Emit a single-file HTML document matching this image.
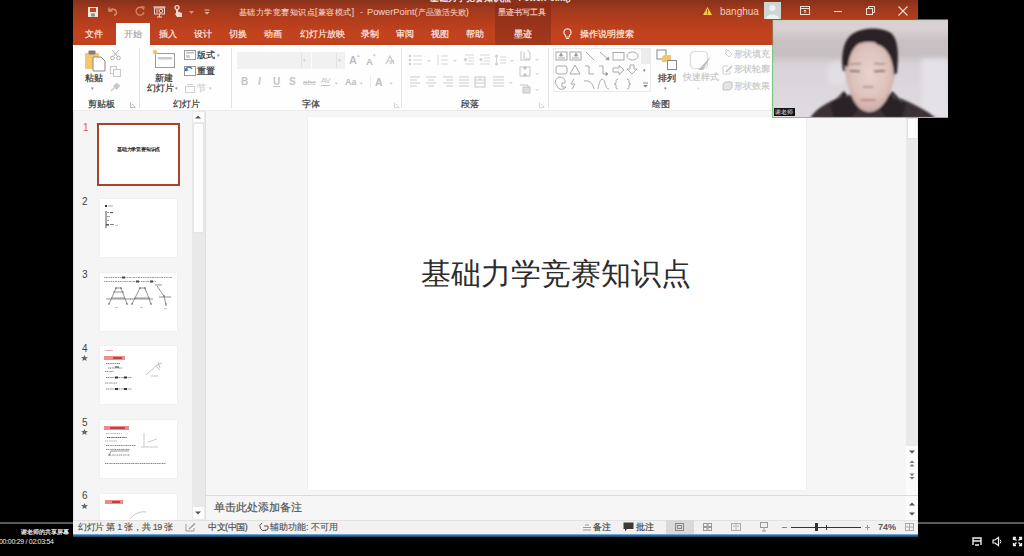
<!DOCTYPE html>
<html><head><meta charset="utf-8">
<style>
*{margin:0;padding:0;box-sizing:border-box}
html,body{width:1024px;height:556px;overflow:hidden;background:#000}
body{position:relative;font-family:"Liberation Sans",sans-serif;color:#444}
.a{position:absolute}
.t{position:absolute;white-space:nowrap;line-height:1}
.tab{color:#fbe8e0;font-size:9px;top:30px;-webkit-text-stroke:0.2px #fbe8e0}
.rl{font-size:9px;color:#3a3a3a;-webkit-text-stroke:0.25px #3a3a3a}
.gl{font-size:9px;color:#444;top:100px;-webkit-text-stroke:0.25px #444}
.dis{color:#c9c9c9;-webkit-text-stroke:0.2px #c9c9c9}
svg{position:absolute;overflow:visible}
</style></head><body>

<!-- window base -->
<div class="a" style="left:73px;top:0;width:845px;height:537px;background:#f6f6f6"></div>
<!-- title bar -->
<div class="a" style="left:73px;top:0;width:845px;height:45px;background:linear-gradient(180deg,#86311a 0%,#9f381c 18%,#b33d1d 45%,#c1421e 72%,#c4421e 88%,#bb401e 100%)"></div>
<!-- tab row -->

<!-- active tab 开始 -->
<div class="a" style="left:116px;top:23px;width:34px;height:23px;background:#fefefe"></div>
<!-- 墨迹 contextual tab -->
<div class="a" style="left:495px;top:3px;width:56px;height:42px;background:linear-gradient(180deg,#8a2d17 0%,#98331a 50%,#a4381c 100%)"></div>
<!-- ribbon -->
<div class="a" style="left:73px;top:45px;width:845px;height:66px;background:#fefefe;border-bottom:1px solid #ebebeb"></div>

<!-- title text -->
<div class="t" style="left:239px;top:8px;font-size:8.45px;letter-spacing:0.45px;color:#f0c8ba;-webkit-text-stroke:0.15px #f0c8ba">基础力学竞赛知识点[兼容模式]</div><div class="t" style="left:360px;top:8px;font-size:9px;color:#f0c8ba">-</div><div class="t" style="left:367px;top:8px;font-size:9.3px;color:#f0c8ba;-webkit-text-stroke:0.1px #f0c8ba">PowerPoint(<span style="font-size:8.4px">产品激活失败</span>)</div>
<div class="t" style="left:498px;top:8px;font-size:8.4px;color:#f3d3c6;-webkit-text-stroke:0.15px #f3d3c6">墨迹书写工具</div>

<div class="a" style="left:430px;top:0;width:142px;height:3px;overflow:hidden"><div class="t" style="left:0;top:-6px;font-size:8.5px;color:#f4f0ee;font-weight:bold">基础力学竞赛知识点 - PowerPoint(产品激</div></div>
<!-- tabs -->
<div class="t tab" style="left:85px">文件</div>
<div class="t tab" style="left:124px;color:#6b5550">开始</div>
<div class="t tab" style="left:159px">插入</div>
<div class="t tab" style="left:194px">设计</div>
<div class="t tab" style="left:229px">切换</div>
<div class="t tab" style="left:264px">动画</div>
<div class="t tab" style="left:300px">幻灯片放映</div>
<div class="t tab" style="left:361px">录制</div>
<div class="t tab" style="left:396px">审阅</div>
<div class="t tab" style="left:431px">视图</div>
<div class="t tab" style="left:466px">帮助</div>
<div class="t tab" style="left:514px">墨迹</div>
<div class="t tab" style="left:580px">操作说明搜索</div>


<!-- QAT -->
<svg style="left:88px;top:7px" width="10" height="10" viewBox="0 0 10 10"><rect x="0" y="0" width="10" height="10" fill="#f6e6e0"/><rect x="2" y="1" width="6" height="4" fill="#b8462a"/><rect x="3" y="6.5" width="4" height="3" fill="#9a8a88"/></svg>
<svg style="left:107px;top:6px" width="11" height="10" viewBox="0 0 11 10"><path d="M2 1.5 L2 5 L5.5 5" fill="none" stroke="#d98f76" stroke-width="1.4"/><path d="M2.5 4.5 C5 2 9 2.5 9.5 6.5 C9.5 8 8.5 9 7 9.3" fill="none" stroke="#d98f76" stroke-width="1.4"/></svg>
<svg style="left:135px;top:6px" width="11" height="11" viewBox="0 0 11 11"><path d="M8 2.5 A4 4 0 1 0 9 6" fill="none" stroke="#d6836a" stroke-width="1.3"/><path d="M6 0.5 L9 1 L8.5 4" fill="none" stroke="#d6836a" stroke-width="1.2"/></svg>
<svg style="left:153px;top:6px" width="13" height="12" viewBox="0 0 13 12"><path d="M0.5 1 L12.5 1" stroke="#f2d8ce" stroke-width="1.2"/><rect x="1.5" y="2" width="10" height="6" fill="none" stroke="#f2d8ce" stroke-width="1"/><circle cx="8" cy="5" r="1.8" fill="none" stroke="#f2d8ce" stroke-width="1"/><path d="M3 4 L5.5 4 M3 6 L5 6 M6.5 8 L6.5 11 M4 11 L9 11" stroke="#f2d8ce" stroke-width="1"/></svg>
<svg style="left:173px;top:5px" width="10" height="12" viewBox="0 0 10 12"><circle cx="4" cy="2.6" r="2" fill="none" stroke="#f0d8d0" stroke-width="1.3"/><path d="M3 5 L3 8 L2 9 L4 12 L9 12 L9 8 L5 6.5 L5 5 Z" fill="#f0d8d0"/></svg>
<svg style="left:189px;top:11px" width="5" height="3" viewBox="0 0 5 3"><path d="M0 0 L2.5 3 L5 0Z" fill="#d9907a"/></svg>
<svg style="left:204px;top:9px" width="6" height="6" viewBox="0 0 6 6"><path d="M0.5 1 L5.5 1" stroke="#e8b4a4"/><path d="M0.5 3 L5.5 3 L3 5.5Z" fill="#e8b4a4"/></svg>

<!-- title right -->
<svg style="left:703px;top:7px" width="9" height="8" viewBox="0 0 9 8"><path d="M4.5 0 L9 8 L0 8 Z" fill="#f2c94c"/><rect x="4" y="2.5" width="1" height="3" fill="#7a4a10"/><rect x="4" y="6.2" width="1" height="1" fill="#7a4a10"/></svg>
<div class="t" style="left:720px;top:7px;font-size:10px;color:#f0cdbf">banghua</div>
<div class="a" style="left:764px;top:2px;width:17px;height:17px;background:#cfd6d2"></div>
<svg style="left:764px;top:2px" width="17" height="17" viewBox="0 0 17 17"><circle cx="8.5" cy="6" r="3" fill="#eef0f2"/><path d="M2 17 C2 11 15 11 15 17 Z" fill="#eef0f2"/></svg>
<svg style="left:800px;top:6px" width="10" height="9" viewBox="0 0 10 9"><rect x="0.5" y="0.5" width="9" height="8" fill="none" stroke="#f4dcd2" stroke-width="1"/><path d="M0.5 2.5 L9.5 2.5 M5 4 L5 7 M3.8 5.2 L5 4 L6.2 5.2" fill="none" stroke="#f4dcd2" stroke-width="1"/></svg>
<div class="a" style="left:834px;top:11px;width:8px;height:1px;background:#f4dcd2"></div>
<svg style="left:866px;top:6px" width="9" height="9" viewBox="0 0 9 9"><rect x="0.5" y="2.5" width="6" height="6" fill="none" stroke="#f4dcd2" stroke-width="1"/><path d="M2.5 2.5 L2.5 0.5 L8.5 0.5 L8.5 6.5 L6.5 6.5" fill="none" stroke="#f4dcd2" stroke-width="1"/></svg>
<svg style="left:898px;top:6px" width="10" height="10" viewBox="0 0 10 10"><path d="M0.5 0.5 L9.5 9.5 M9.5 0.5 L0.5 9.5" stroke="#f4dcd2" stroke-width="1.1"/></svg>
<!-- lightbulb -->
<svg style="left:563px;top:28px" width="9" height="12" viewBox="0 0 9 12"><path d="M4.5 0.8 A3.6 3.6 0 0 1 6.6 7.3 L6.3 9 L2.7 9 L2.4 7.3 A3.6 3.6 0 0 1 4.5 0.8 Z" fill="none" stroke="#fbe6de" stroke-width="1.1"/><path d="M3 10.5 L6 10.5" stroke="#fbe6de" stroke-width="1"/></svg>


<!-- ===== RIBBON: clipboard ===== -->
<svg style="left:84px;top:49px" width="22" height="23" viewBox="0 0 22 23"><rect x="1" y="4" width="14" height="16" rx="1" fill="#f4c86a"/><rect x="4.5" y="1.5" width="7" height="4" rx="1" fill="#7c7c7c"/><path d="M9 8 L17 8 L21 12 L21 22 L9 22 Z" fill="#fff" stroke="#8a8a8a" stroke-width="1"/></svg>
<div class="t rl" style="left:85px;top:74px">粘贴</div>
<div class="t" style="left:91px;top:86px;font-size:5px;color:#888">▾</div>
<svg style="left:110px;top:50px" width="11" height="10" viewBox="0 0 11 10"><path d="M2 0 L8 7 M9 0 L3 7" stroke="#b0b0b0" stroke-width="1"/><circle cx="2.5" cy="8" r="1.8" fill="none" stroke="#b0b0b0"/><circle cx="8.5" cy="8" r="1.8" fill="none" stroke="#b0b0b0"/></svg>
<svg style="left:110px;top:66px" width="11" height="11" viewBox="0 0 11 11"><rect x="0.5" y="0.5" width="6" height="7" fill="none" stroke="#c8c8c8"/><rect x="3.5" y="3.5" width="7" height="7" fill="#fbfbfb" stroke="#c8c8c8"/></svg>
<svg style="left:110px;top:83px" width="10" height="9" viewBox="0 0 10 9"><path d="M1 8 L5 4 M4 3 L7 0.5 L9.5 3 L6.5 6 Z" fill="#c8c8c8" stroke="#c8c8c8" stroke-width="1.2"/></svg>
<div class="t gl" style="left:88px">剪贴板</div>
<svg style="left:130px;top:102px" width="6" height="6" viewBox="0 0 6 6"><path d="M0.5 0.5 L0.5 5.5 L5.5 5.5 M2 2 L5 5" fill="none" stroke="#aaa" stroke-width="0.8"/></svg>
<div class="a" style="left:139px;top:48px;width:1px;height:60px;background:#e3e3e3"></div>

<!-- ===== slides group ===== -->
<svg style="left:152px;top:49px" width="24" height="20" viewBox="0 0 24 20"><rect x="3.5" y="4.5" width="19" height="14" fill="#fff" stroke="#9a9a9a"/><rect x="6" y="8" width="14" height="2.5" fill="#c9c9c9"/><circle cx="3" cy="3" r="2.3" fill="#f4c86a"/></svg>
<div class="t rl" style="left:155px;top:74px">新建</div>
<div class="t rl" style="left:147px;top:84px">幻灯片</div>
<div class="t" style="left:175px;top:86px;font-size:5px;color:#888">▾</div>
<svg style="left:184px;top:50px" width="12" height="10" viewBox="0 0 12 10"><rect x="0.5" y="0.5" width="11" height="9" fill="#fff" stroke="#9a9a9a"/><rect x="2" y="2" width="8" height="1.5" fill="#c0c0c0"/><rect x="2" y="5" width="4" height="3" fill="#d0d0d0"/></svg>
<div class="t rl" style="left:197px;top:51px">版式</div>
<div class="t" style="left:217px;top:53px;font-size:5px;color:#888">▾</div>
<svg style="left:184px;top:66px" width="12" height="10" viewBox="0 0 12 10"><rect x="0.5" y="0.5" width="11" height="9" fill="#fff" stroke="#9a9a9a"/><path d="M1.5 5 A3.5 3.5 0 0 1 8 3" fill="none" stroke="#3a7ab8" stroke-width="1.4"/><path d="M1 2 L2 5.5 L5 4" fill="#3a7ab8"/></svg>
<div class="t rl" style="left:197px;top:67px">重置</div>
<svg style="left:185px;top:84px" width="10" height="9" viewBox="0 0 10 9"><rect x="0.5" y="2.5" width="9" height="6" fill="none" stroke="#d0d0d0"/><path d="M2 0.5 L8 0.5" stroke="#d0d0d0"/></svg>
<div class="t rl dis" style="left:197px;top:84px">节</div>
<div class="t" style="left:209px;top:86px;font-size:5px;color:#ccc">▾</div>
<div class="t gl" style="left:173px">幻灯片</div>
<div class="a" style="left:231px;top:48px;width:1px;height:60px;background:#e3e3e3"></div>

<!-- ===== font group ===== -->
<div class="a" style="left:237px;top:52px;width:108px;height:17px;background:#f1f1f1"></div>
<div class="a" style="left:301px;top:53px;width:1px;height:15px;background:#e2e2e2"></div>
<div class="a" style="left:311px;top:52px;width:1px;height:17px;background:#fbfbfb"></div>
<div class="a" style="left:336px;top:53px;width:1px;height:15px;background:#e2e2e2"></div>
<div class="t" style="left:303px;top:58px;font-size:5px;color:#ccc">▾</div>
<div class="t" style="left:338px;top:58px;font-size:5px;color:#ccc">▾</div>
<div class="t" style="left:349px;top:55px;font-size:11px;font-weight:bold;color:#bdbdbd">A</div>
<div class="t" style="left:357px;top:53px;font-size:5px;color:#c4c4c4">▴</div>
<div class="t" style="left:366px;top:57px;font-size:9.5px;font-weight:bold;color:#bdbdbd">A</div>
<div class="t" style="left:373px;top:53px;font-size:5px;color:#c4c4c4">▾</div>
<svg style="left:385px;top:55px" width="10" height="10" viewBox="0 0 10 10"><path d="M1 9 L5 1 L9 9 M2.5 6 L7.5 6" fill="none" stroke="#c8c8c8" stroke-width="1.2"/><path d="M5 9 L9 5" stroke="#c8c8c8" stroke-width="1.6"/></svg>
<div class="t" style="left:241px;top:77px;font-size:10px;font-weight:bold;color:#c4c4c4">B</div>
<div class="t" style="left:258px;top:77px;font-size:10px;font-style:italic;font-weight:bold;color:#c4c4c4">I</div>
<div class="t" style="left:273px;top:77px;font-size:10px;font-weight:bold;text-decoration:underline;color:#c4c4c4">U</div>
<div class="t" style="left:289px;top:77px;font-size:10px;font-weight:bold;color:#c4c4c4">S</div>
<div class="t" style="left:303px;top:79px;font-size:8px;text-decoration:line-through;color:#c4c4c4">abc</div>
<div class="t" style="left:321px;top:77px;font-size:8px;color:#c4c4c4;border-bottom:1px solid #c4c4c4;letter-spacing:-0.5px">AV</div>
<div class="t" style="left:335px;top:81px;font-size:5px;color:#ccc">▾</div>
<div class="t" style="left:345px;top:78px;font-size:9px;font-weight:bold;color:#bdbdbd">Aa</div>
<div class="t" style="left:360px;top:81px;font-size:5px;color:#ccc">▾</div>
<div class="a" style="left:370px;top:75px;width:1px;height:13px;background:#ececec"></div>
<div class="t" style="left:375px;top:77px;font-size:10.5px;font-weight:bold;color:#bdbdbd">A</div>
<div class="t" style="left:390px;top:81px;font-size:5px;color:#ccc">▾</div>
<div class="t gl" style="left:302px">字体</div>
<svg style="left:394px;top:102px" width="6" height="6" viewBox="0 0 6 6"><path d="M0.5 0.5 L0.5 5.5 L5.5 5.5 M2 2 L5 5" fill="none" stroke="#ccc" stroke-width="0.8"/></svg>
<div class="a" style="left:401px;top:48px;width:1px;height:60px;background:#e3e3e3"></div>

<!-- ===== paragraph group ===== -->
<svg style="left:408px;top:54px" width="110" height="12" viewBox="0 0 110 12">
 <g fill="#cfcfcf" stroke="#d6d6d6" stroke-width="1">
  <circle cx="2" cy="2" r="1.3" stroke="none"/><circle cx="2" cy="6" r="1.3" stroke="none"/><circle cx="2" cy="10" r="1.3" stroke="none"/>
  <path d="M5 2 L14 2 M5 6 L14 6 M5 10 L14 10"/>
  <path d="M30 1 L30 11 M33 2 L40 2 M33 6 L40 6 M33 10 L40 10"/>
  <path d="M57 1 L66 1 M60 4 L66 4 M60 7 L66 7 M57 10 L66 10"/><circle cx="57.5" cy="5.5" r="1.6" stroke="none"/>
  <path d="M72 1 L82 1 M76 4 L82 4 M76 7 L82 7 M72 10 L82 10"/><circle cx="73" cy="5.5" r="1.6" stroke="none"/>
  <path d="M88.5 1 L88.5 11 M92 3 L98 3 M92 6 L98 6 M92 9 L98 9"/><circle cx="88.5" cy="2" r="1.5" stroke="none"/><circle cx="88.5" cy="10" r="1.5" stroke="none"/>
 </g>
 <g fill="#d8d8d8"><path d="M19 6 l2 2 l2 -2 z M45 6 l2 2 l2 -2 z M102 6 l2 2 l2 -2 z"/></g>
</svg>
<svg style="left:409px;top:76px" width="105" height="12" viewBox="0 0 105 12">
 <g stroke="#cacaca" stroke-width="1.1" fill="none">
  <path d="M1 1 L11 1 M1 4 L8 4 M1 7 L11 7 M1 10 L8 10"/>
  <path d="M17 1 L27 1 M19 4 L25 4 M17 7 L27 7 M19 10 L25 10"/>
  <path d="M34 1 L44 1 M37 4 L44 4 M34 7 L44 7 M37 10 L44 10"/>
  <path d="M50 1 L60 1 M50 4 L60 4 M50 7 L60 7 M50 10 L60 10"/>
  <rect x="66" y="1" width="10" height="10"/><path d="M66 4 L76 4 M66 7 L76 7 M71 1 L71 4"/>
  <path d="M84 1 L95 1 M84 4 L95 4 M84 7 L95 7 M84 10 L95 10"/>
 </g>
 <path d="M100 6 l2 2 l2 -2 z" fill="#d8d8d8"/>
</svg>
<svg style="left:519px;top:49px" width="22" height="45" viewBox="0 0 22 45">
 <g stroke="#c4c4c4" stroke-width="1" fill="none">
  <path d="M1 11 L11 11 M2 2 L2 10 M5 3 L5 10 M8.5 1 L11 4 L11 10 L6 10"/>
  <rect x="1" y="18" width="10" height="9"/><circle cx="6" cy="19" r="1.2" fill="#bbb"/><circle cx="6" cy="26" r="1.2" fill="#bbb"/>
  <path d="M1 36 L9 36 L9 43 L4 43"/><rect x="4" y="38" width="7" height="6" fill="#ddd"/>
 </g>
 <path d="M16 10 l2 2 l2 -2z M16 24 l2 2 l2 -2z M16 40 l2 2 l2 -2z" fill="#dcdcdc"/>
</svg>
<div class="t gl" style="left:461px">段落</div>
<svg style="left:539px;top:102px" width="6" height="6" viewBox="0 0 6 6"><path d="M0.5 0.5 L0.5 5.5 L5.5 5.5 M2 2 L5 5" fill="none" stroke="#ccc" stroke-width="0.8"/></svg>
<div class="a" style="left:548px;top:48px;width:1px;height:60px;background:#e3e3e3"></div>

<!-- ===== drawing group ===== -->
<div class="a" style="left:553px;top:48px;width:98px;height:44px;border:1px solid #ececec;background:#fdfdfd"></div>
<div class="a" style="left:641px;top:49px;width:9px;height:15px;background:#ececec"></div>
<div class="t" style="left:643px;top:68px;font-size:5px;color:#777">▾</div>
<svg style="left:642px;top:82px" width="7" height="6" viewBox="0 0 7 6"><path d="M1 1 L6 1" stroke="#888"/><path d="M1 3 L6 3 L3.5 5.5 Z" fill="#888"/></svg>
<svg style="left:555px;top:51px" width="86" height="40" viewBox="0 0 86 40">
 <g stroke="#a0a0a0" stroke-width="0.9" fill="none">
  <rect x="1" y="1" width="11" height="8"/><path d="M3 7 L10 7"/><path d="M6 2 L7.5 5 L4.5 5Z" fill="#888"/>
  <rect x="15" y="1" width="11" height="8"/><path d="M17 7 L24 7"/><path d="M21 2 L22.5 5 L19.5 5Z" fill="#888"/>
  <path d="M31 1 L39 9"/>
  <path d="M45 1 L54 9"/><path d="M54 9 L51 8.5 L53.5 6Z" fill="#888"/>
  <rect x="58" y="1.5" width="11" height="7.5"/>
  <ellipse cx="77.5" cy="5" rx="5.5" ry="4"/>
  <rect x="1" y="15" width="11" height="8" rx="2"/>
  <path d="M20 14 L25 23 L15 23 Z"/>
  <path d="M30 15 L34 15 L34 23 L39 23"/>
  <path d="M44 15 L48 15 L48 23 L53 23"/><path d="M53 23 L51 21.5 L51 24.5Z" fill="#888"/>
  <path d="M58 17 L64 17 L64 14.5 L69 19 L64 23.5 L64 21 L58 21 Z"/>
  <path d="M75 14 L79 14 L79 18 L82 18 L77 23 L72 18 L75 18 Z"/>
  <path d="M2 35 A5 5 0 1 1 10 32 L7 32 L7 36 L11 36 A5 5 0 0 1 2 35 Z"/>
  <path d="M19 28 L16 33 L20 33 L17 38"/>
  <path d="M29 30 C34 29 38 32 39 38"/>
  <path d="M43 38 C45 26 48 26 50 32 C51 36 52 38 54 38"/>
  <path d="M63 28 C61 28 61 30 61 32 C61 33 60 33 59 33 C60 33 61 33 61 35 C61 37 61 38 63 38"/>
  <path d="M72 28 C74 28 74 30 74 32 C74 33 75 33 76 33 C75 33 74 33 74 35 C74 37 74 38 72 38"/>
 </g>
</svg>
<svg style="left:656px;top:49px" width="22" height="22" viewBox="0 0 22 22"><rect x="1" y="1" width="9" height="9" fill="#fff" stroke="#888"/><path d="M8 6 L15 6 L15 12 L20 12 L20 17 L12 17 L12 13 L6 13 L6 8 Z" fill="#f3c46c"/><rect x="11.5" y="11.5" width="9" height="9" fill="#fff" stroke="#888"/></svg>
<div class="t rl" style="left:658px;top:74px">排列</div>
<div class="t" style="left:664px;top:86px;font-size:5px;color:#888">▾</div>
<svg style="left:689px;top:50px" width="24" height="22" viewBox="0 0 24 22"><rect x="1.5" y="1.5" width="17" height="17" rx="4" fill="none" stroke="#dadada" stroke-width="1.2"/><path d="M22 6 L12 17 L9 20 L14 20 Z" fill="#bdbdbd"/></svg>
<div class="t rl dis" style="left:683px;top:73px">快速样式</div>
<div class="t" style="left:697px;top:86px;font-size:5px;color:#ddd">▾</div>
<svg style="left:723px;top:49px" width="10" height="9" viewBox="0 0 10 9"><path d="M2 4 L5 1 L9 5 L6 8 Z" fill="none" stroke="#cfcfcf"/><path d="M4 0 L2 2" stroke="#cfcfcf"/></svg>
<div class="t rl dis" style="left:734px;top:50px">形状填充</div>
<svg style="left:722px;top:65px" width="11" height="10" viewBox="0 0 11 10"><path d="M1 1 L6 1 M1 1 L1 9 L8 9 L8 6" fill="none" stroke="#cfcfcf"/><path d="M4 7 L10 1" stroke="#bdbdbd" stroke-width="1.4"/></svg>
<div class="t rl dis" style="left:734px;top:65px">形状轮廓</div>
<svg style="left:722px;top:81px" width="11" height="10" viewBox="0 0 11 10"><path d="M3 1 L10 1 L10 7 L8 9 L1 9 L1 3 Z" fill="#e4e4e4" stroke="#c4c4c4"/></svg>
<div class="t rl dis" style="left:734px;top:82px">形状效果</div>
<div class="t gl" style="left:652px">绘图</div>


<!-- ===== MAIN AREA ===== -->
<!-- thumbnail pane -->
<div class="a" style="left:73px;top:111px;width:133px;height:409px;background:#f5f5f5;border-left:1px solid #e4e4e4"></div>
<!-- pane scrollbar -->
<div class="a" style="left:192px;top:111px;width:13px;height:409px;background:#e9e9e9"></div>
<div class="a" style="left:193px;top:112px;width:11px;height:10px;background:#fdfdfd"></div>
<svg style="left:195px;top:115px" width="6" height="4" viewBox="0 0 6 4"><path d="M0 3.5 L3 0.5 L6 3.5Z" fill="#555"/></svg>
<div class="a" style="left:193px;top:123px;width:11px;height:110px;background:#fdfdfd;border:1px solid #e4e4e4"></div>
<div class="a" style="left:193px;top:507px;width:11px;height:12px;background:#fdfdfd"></div>
<svg style="left:195px;top:511px" width="6" height="4" viewBox="0 0 6 4"><path d="M0 0.5 L3 3.5 L6 0.5Z" fill="#555"/></svg>
<div class="a" style="left:205px;top:111px;width:1px;height:409px;background:#e0e0e0"></div>

<!-- slide numbers -->
<div class="t" style="left:83px;top:123px;font-size:10px;color:#d1603f">1</div>
<div class="t" style="left:82px;top:197px;font-size:10px;color:#444">2</div>
<div class="t" style="left:82px;top:270px;font-size:10px;color:#444">3</div>
<div class="t" style="left:82px;top:344px;font-size:10px;color:#444">4</div>
<div class="t" style="left:82px;top:418px;font-size:10px;color:#444">5</div>
<div class="t" style="left:82px;top:491px;font-size:10px;color:#444">6</div>
<svg style="left:81px;top:355px" width="7" height="6" viewBox="0 0 7 6"><path d="M3.5 0 L4.4 2.1 L7 2.2 L5 3.8 L5.7 6 L3.5 4.8 L1.3 6 L2 3.8 L0 2.2 L2.6 2.1 Z" fill="#666"/></svg>
<svg style="left:81px;top:429px" width="7" height="6" viewBox="0 0 7 6"><path d="M3.5 0 L4.4 2.1 L7 2.2 L5 3.8 L5.7 6 L3.5 4.8 L1.3 6 L2 3.8 L0 2.2 L2.6 2.1 Z" fill="#666"/></svg>
<svg style="left:81px;top:503px" width="7" height="6" viewBox="0 0 7 6"><path d="M3.5 0 L4.4 2.1 L7 2.2 L5 3.8 L5.7 6 L3.5 4.8 L1.3 6 L2 3.8 L0 2.2 L2.6 2.1 Z" fill="#666"/></svg>

<!-- thumb 1 -->
<div class="a" style="left:97px;top:123px;width:83px;height:63px;background:#fff;border:2px solid #a8432c"></div>
<div class="t" style="left:117px;top:147px;font-size:5px;color:#111;-webkit-text-stroke:0.15px #111;letter-spacing:-0.2px">基础力学竞赛知识点</div>
<!-- thumb 2 -->
<div class="a" style="left:100px;top:199px;width:77px;height:58px;background:#fff;box-shadow:0 0 1px #d8d8d8"></div>
<svg style="left:100px;top:199px" width="77" height="58" viewBox="0 0 77 58"><g fill="#666"><rect x="5" y="6" width="2" height="2" fill="#333"/><rect x="8" y="6.5" width="5" height="1" fill="#aaa"/><rect x="5.5" y="12" width="1" height="17" fill="#555"/><rect x="7" y="13" width="2" height="1" fill="#999"/><rect x="10" y="13" width="3" height="1.2"/><rect x="7" y="17" width="3" height="1" fill="#999"/><rect x="7" y="21" width="2" height="1" fill="#999"/><rect x="6" y="25" width="3" height="1.5" fill="#555"/><rect x="10" y="25" width="4" height="1" fill="#888"/><rect x="15" y="26" width="3" height="0.8" fill="#bbb"/></g></svg>
<!-- thumb 3 -->
<div class="a" style="left:100px;top:273px;width:77px;height:58px;background:#fff;box-shadow:0 0 1px #d8d8d8"></div>
<svg style="left:100px;top:273px" width="77" height="58" viewBox="0 0 77 58">
 <g stroke="#999" stroke-width="1" stroke-dasharray="1.2 0.6 2 0.8"><path d="M4 4.5 L72 4.5"/><path d="M4 8.5 L56 8.5"/></g>
 <g fill="#444"><rect x="22" y="3.5" width="3" height="2"/><rect x="36" y="7.5" width="3" height="2"/><rect x="50" y="7.5" width="3" height="2"/></g>
 <g stroke="#666" stroke-width="0.7" fill="none">
  <path d="M9 31 L16 15 L21 15 L27 31 M11 25 L25 25 M6 26 L31 26 M13 19 L24 19"/>
  <path d="M32 31 L40 15 L45 15 L51 31 M34 25 L50 25 M30 26 L53 26"/>
  <path d="M57 13 L64 23 L66 32 M55 12 L62 12 M59 24 L71 24 M66 30 L66 33"/>
 </g>
 <g fill="#555"><circle cx="16" cy="15" r="0.8"/><circle cx="21" cy="15" r="0.8"/><circle cx="40" cy="15" r="0.8"/><circle cx="45" cy="15" r="0.8"/><circle cx="9" cy="31" r="0.8"/><circle cx="27" cy="31" r="0.8"/><circle cx="32" cy="31" r="0.8"/><circle cx="51" cy="31" r="0.8"/><circle cx="64" cy="23" r="0.8"/></g>
 <g fill="#bbb"><rect x="15" y="34" width="3" height="0.8"/><rect x="40" y="34" width="3" height="0.8"/><rect x="64" y="35" width="3" height="0.8"/></g>
</svg>
<!-- thumb 4 -->
<div class="a" style="left:100px;top:346px;width:77px;height:58px;background:#fff;box-shadow:0 0 1px #d8d8d8"></div>
<svg style="left:100px;top:346px" width="77" height="58" viewBox="0 0 77 58">
 <rect x="5" y="4" width="8" height="1" fill="#e8a8b0"/>
 <rect x="4" y="10" width="21" height="4" fill="#f28b8b"/><rect x="13" y="11" width="9" height="2" fill="#b84848"/>
 <g stroke="#777" stroke-width="0.9" stroke-dasharray="1 0.5 1.5 0.7" fill="none">
  <path d="M6 17.5 L20 17.5"/><path d="M8 22 L22 22"/><path d="M5 25.5 L14 25.5"/>
  <path d="M6 31.5 L32 31.5"/><path d="M5 37 L17 37"/><path d="M6 43 L32 43"/>
 </g>
 <g fill="#333"><rect x="15" y="20.5" width="4" height="1"/><rect x="15" y="30.5" width="3" height="2"/><rect x="24" y="30.5" width="3" height="2"/><rect x="15" y="42" width="3" height="2"/><rect x="24" y="42" width="3" height="2"/></g>
 <path d="M46 29 L57 19 L62 17 M56 20 L60 24 M51 30 L58 30 M58 16 L60 22" stroke="#999" stroke-width="0.6" fill="none"/>
</svg>
<!-- thumb 5 -->
<div class="a" style="left:100px;top:420px;width:77px;height:58px;background:#fff;box-shadow:0 0 1px #d8d8d8"></div>
<svg style="left:100px;top:420px" width="77" height="58" viewBox="0 0 77 58">
 <rect x="4" y="6" width="25" height="4" fill="#f28b8b"/><rect x="10" y="7" width="15" height="2" fill="#b84848"/>
 <g stroke="#777" stroke-width="0.9" stroke-dasharray="1 0.5 1.5 0.7" fill="none">
  <path d="M6 13.5 L22 13.5" stroke="#aaa"/><path d="M7 17.5 L27 17.5" stroke="#444"/><path d="M5 21 L17 21" stroke="#aaa"/>
  <path d="M6 25.5 L36 25.5"/><path d="M6 29.5 L30 29.5"/><path d="M8 35 L30 35"/><path d="M5 43.5 L66 43.5"/>
 </g>
 <path d="M9 36 L11 31 L29 31" stroke="#555" stroke-width="0.6" fill="none"/>
 <path d="M44 13 L44 27 M41 27 L58 27 M48 22 L57 19" stroke="#aaa" stroke-width="0.6" fill="none"/>
</svg>
<!-- thumb 6 -->
<div class="a" style="left:100px;top:494px;width:77px;height:26px;background:#fff;box-shadow:0 0 1px #d8d8d8"></div>
<svg style="left:100px;top:494px" width="77" height="26" viewBox="0 0 77 26">
 <rect x="5" y="6" width="18" height="4" fill="#f08a8a"/><rect x="12" y="7" width="8" height="2" fill="#c04040"/>
 <path d="M30 25 C34 20 40 17 46 18" stroke="#aaa" stroke-width="0.7" fill="none"/>
</svg>

<!-- slide -->
<div class="a" style="left:308px;top:117px;width:498px;height:373px;background:#fff;box-shadow:0 0 1px #d6d6d6"></div>
<div class="t" style="left:421px;top:259px;font-size:30px;color:#2c2c2c;font-family:'Liberation Serif',serif">基础力学竞赛知识点</div>

<!-- right scrollbar -->
<div class="a" style="left:906px;top:111px;width:12px;height:384px;background:#e9e9e9"></div>
<div class="a" style="left:907px;top:118px;width:11px;height:21px;background:#fdfdfd;border:1px solid #e2e2e2"></div>
<div class="a" style="left:906px;top:446px;width:12px;height:49px;background:#fbfbfb"></div>
<svg style="left:909px;top:450px" width="6" height="4" viewBox="0 0 6 4"><path d="M0 0.5 L3 3.5 L6 0.5Z" fill="#555"/></svg>
<svg style="left:909px;top:460px" width="6" height="7" viewBox="0 0 6 7"><path d="M0.5 3 L3 0.5 L5.5 3Z M0.5 6.5 L3 4 L5.5 6.5Z" fill="#777"/></svg>
<svg style="left:909px;top:473px" width="6" height="7" viewBox="0 0 6 7"><path d="M0.5 0.5 L3 3 L5.5 0.5Z M0.5 4 L3 6.5 L5.5 4Z" fill="#777"/></svg>

<!-- notes -->
<div class="a" style="left:206px;top:495px;width:712px;height:1px;background:#dadada"></div>
<div class="a" style="left:206px;top:496px;width:700px;height:24px;background:#f6f6f6"></div>
<div class="t" style="left:214px;top:502px;font-size:10.6px;color:#555;-webkit-text-stroke:0.2px #555">单击此处添加备注</div>
<div class="a" style="left:906px;top:496px;width:12px;height:24px;background:#fbfbfb"></div>
<svg style="left:909px;top:502px" width="6" height="4" viewBox="0 0 6 4"><path d="M0 3.5 L3 0.5 L6 3.5Z" fill="#555"/></svg>
<svg style="left:909px;top:512px" width="6" height="4" viewBox="0 0 6 4"><path d="M0 0.5 L3 3.5 L6 0.5Z" fill="#555"/></svg>

<!-- status bar -->
<div class="a" style="left:73px;top:520px;width:845px;height:15px;background:#f1f1f1;border-top:1px solid #e2e2e2"></div>
<div class="a" style="left:73px;top:534px;width:845px;height:3px;background:linear-gradient(180deg,#9fcdea 0%,#3a78ab 35%,#235a88 70%,#183e62 100%)"></div>
<div class="t" style="left:78px;top:523px;font-size:9px;color:#555;letter-spacing:-0.28px;-webkit-text-stroke:0.15px #555">幻灯片 第 1 张，共 19 张</div>
<svg style="left:185px;top:523px" width="11" height="9" viewBox="0 0 11 9"><path d="M1 1 L1 8 L9 8 L9 5" fill="none" stroke="#999"/><path d="M4 6 L10 0.5" stroke="#999" stroke-width="1.2"/></svg>
<div class="t" style="left:208px;top:523px;font-size:9px;color:#444;letter-spacing:-0.45px;-webkit-text-stroke:0.15px #444">中文(中国)</div>
<svg style="left:259px;top:522px" width="10" height="10" viewBox="0 0 10 10"><path d="M3 1 A4 4 0 1 0 7 8 M5 4 L9 4 L9 7 L6 9" fill="none" stroke="#555" stroke-width="1"/></svg>
<div class="t" style="left:270px;top:523px;font-size:9px;color:#555;-webkit-text-stroke:0.15px #555">辅助功能: 不可用</div>
<svg style="left:582px;top:524px" width="10" height="7" viewBox="0 0 10 7"><path d="M3 1 L7 1 M1 3.5 L9 3.5 M1 6 L9 6" stroke="#999"/></svg>
<div class="t" style="left:593px;top:523px;font-size:9px;color:#444;-webkit-text-stroke:0.2px #444">备注</div>
<svg style="left:623px;top:522px" width="11" height="10" viewBox="0 0 11 10"><path d="M0.5 0.5 L10.5 0.5 L10.5 7 L4 7 L2 9.5 L2 7 L0.5 7 Z" fill="#3a3a3a"/></svg>
<div class="t" style="left:636px;top:523px;font-size:9px;color:#444;-webkit-text-stroke:0.2px #444">批注</div>
<div class="a" style="left:666px;top:520px;width:28px;height:14px;background:#d9d9d9"></div>
<svg style="left:675px;top:523px" width="9" height="8" viewBox="0 0 9 8"><rect x="0.5" y="0.5" width="8" height="7" fill="none" stroke="#888"/><rect x="2.5" y="2.5" width="4" height="3" fill="none" stroke="#888"/></svg>
<svg style="left:703px;top:523px" width="9" height="8" viewBox="0 0 9 8"><rect x="0.5" y="0.5" width="3.5" height="3" fill="none" stroke="#999"/><rect x="5" y="0.5" width="3.5" height="3" fill="none" stroke="#999"/><rect x="0.5" y="4.5" width="3.5" height="3" fill="none" stroke="#999"/><rect x="5" y="4.5" width="3.5" height="3" fill="none" stroke="#999"/></svg>
<svg style="left:731px;top:523px" width="10" height="8" viewBox="0 0 10 8"><rect x="0.5" y="0.5" width="9" height="7" fill="none" stroke="#aaa"/><path d="M5 0.5 L5 7.5 M2 3 L4 3 M6 3 L8 3" stroke="#aaa"/></svg>
<svg style="left:760px;top:522px" width="8" height="10" viewBox="0 0 8 10"><rect x="0.5" y="0.5" width="7" height="5" fill="none" stroke="#999"/><path d="M4 5.5 L4 9 M2 9 L6 9" stroke="#999"/></svg>
<div class="a" style="left:782px;top:527px;width:5px;height:1px;background:#888"></div>
<div class="a" style="left:791px;top:527px;width:70px;height:1px;background:#333"></div>
<div class="a" style="left:815px;top:523px;width:3px;height:8px;background:#333"></div>
<div class="a" style="left:826px;top:525px;width:1px;height:5px;background:#333"></div>
<div class="a" style="left:865px;top:527px;width:5px;height:1px;background:#999"></div>
<div class="a" style="left:867px;top:525px;width:1px;height:5px;background:#999"></div>
<div class="t" style="left:878px;top:523px;font-size:9px;color:#444;-webkit-text-stroke:0.2px #444">74%</div>
<svg style="left:905px;top:523px" width="9" height="8" viewBox="0 0 9 8"><rect x="0.5" y="0.5" width="8" height="7" fill="none" stroke="#aaa"/><path d="M4.5 0.5 L4.5 7.5 M0.5 4 L8.5 4" stroke="#aaa"/></svg>

<!-- player bar -->
<div class="a" style="left:0;top:522px;width:73px;height:2px;background:#5a5a5a"></div>
<div class="a" style="left:918px;top:522px;width:106px;height:2px;background:#5a5a5a"></div>
<div class="t" style="left:21px;top:529px;font-size:6px;color:#f2f2f2;-webkit-text-stroke:0.2px #f2f2f2">谢老师的共享屏幕</div>
<div class="t" style="left:-1px;top:538px;font-size:7px;color:#eee;letter-spacing:-0.3px">00:00:29 / 02:03:54</div>
<svg style="left:972px;top:537px" width="10" height="9" viewBox="0 0 10 9"><path d="M1 8 L1 1 L9 1 L9 8 M1 4 L9 4 M3 8 L7 8" fill="none" stroke="#eee" stroke-width="1.4"/></svg>
<svg style="left:992px;top:537px" width="10" height="9" viewBox="0 0 10 9"><path d="M1 3 L3 3 L6.5 0.5 L6.5 8.5 L3 6 L1 6 Z" fill="none" stroke="#eee" stroke-width="1.2"/><path d="M8 2.5 A3 3 0 0 1 8 6.5" fill="none" stroke="#eee" stroke-width="1"/></svg>
<svg style="left:1013px;top:537px" width="9" height="9" viewBox="0 0 9 9"><path d="M0.5 3 L0.5 0.5 L3 0.5 M6 0.5 L8.5 0.5 L8.5 3 M8.5 6 L8.5 8.5 L6 8.5 M3 8.5 L0.5 8.5 L0.5 6 M1 1 L3.5 3.5 M8 1 L5.5 3.5 M8 8 L5.5 5.5 M1 8 L3.5 5.5" fill="none" stroke="#eee" stroke-width="1.3"/></svg>


<!-- ===== WEBCAM overlay ===== -->
<svg style="left:772px;top:19px;overflow:hidden" width="176" height="99" viewBox="0 0 176 99">
 <defs>
  <linearGradient id="bg" x1="0" y1="0" x2="0" y2="1">
   <stop offset="0" stop-color="#d8d0d3"/>
   <stop offset="0.1" stop-color="#dad1d4"/>
   <stop offset="0.22" stop-color="#c9c0c3"/>
   <stop offset="0.36" stop-color="#c6bec1"/>
   <stop offset="0.46" stop-color="#d8d3d8"/>
   <stop offset="1" stop-color="#dfdce1"/>
  </linearGradient>
  <radialGradient id="skin" cx="0.5" cy="0.45" r="0.6">
   <stop offset="0" stop-color="#e8d3cd"/>
   <stop offset="0.6" stop-color="#dec3bc"/>
   <stop offset="1" stop-color="#c4a39e"/>
  </radialGradient>
  <filter id="bl" x="-10%" y="-10%" width="120%" height="120%"><feGaussianBlur stdDeviation="1.2"/></filter>
  <filter id="bl2" x="-10%" y="-10%" width="120%" height="120%"><feGaussianBlur stdDeviation="2.5"/></filter>
 </defs>
 <rect width="176" height="99" fill="url(#bg)"/>
 <rect x="150" y="40" width="26" height="59" fill="#e4e2e7" filter="url(#bl2)"/>
 <ellipse cx="65" cy="55" rx="10" ry="12" fill="#e2dfe3" filter="url(#bl2)"/>
 <g filter="url(#bl)">
  <!-- jacket -->
  <path d="M38 99 C44 90 54 84 64 80 L78 76 L116 76 L130 80 C142 85 154 91 164 99 Z" fill="#3b3236"/>
  <path d="M58 86 L72 72 L86 90 L80 99 L62 99 Z" fill="#2c2427"/>
  <path d="M134 86 L120 72 L108 90 L114 99 L130 99 Z" fill="#2c2427"/>
  <path d="M66 80 L70 76 M74 78 L78 75 M120 76 L124 80 M126 79 L130 83" stroke="#6a6066" stroke-width="1"/>
  <!-- hair -->
  <path d="M71 52 C69 36 71 20 82 14 C92 8 110 8 119 14 C126 20 127 34 125 54 Z" fill="#2b2325"/>
  <!-- face -->
  <path d="M73 46 C73 32 82 23 96 23 C112 23 123 30 123 48 C123 62 119 74 113 83 C107 91 102 93 97 93 C91 93 86 89 82 82 C77 72 73 60 73 46 Z" fill="url(#skin)"/>
  <!-- fringe / sideburns -->
  <path d="M71 46 C72 32 78 24 90 22 C82 27 77 34 76 48 Z" fill="#2b2325"/>
  <path d="M104 22 C116 23 125 32 125 54 L122 56 C121 40 116 28 104 25 Z" fill="#2b2325"/>
  <!-- eyes / brows -->
  <path d="M78 45 L89 44.5 M102 44.5 L113 45" stroke="#a58681" stroke-width="1.4"/>
  <path d="M78 52 L88 52.5 M102 52.5 L113 52" stroke="#5e4444" stroke-width="1.6"/>
  <path d="M91 68 L101 68" stroke="#b58c86" stroke-width="1.8"/>
  <path d="M89 81 L104 81" stroke="#c08a86" stroke-width="2.2"/>
 </g>
 <!-- border -->
 <path d="M0.5 26 L0.5 98.5 L176 98.5" fill="none" stroke="#76c884" stroke-width="1.2"/>
 <path d="M0.5 0 L0.5 26" stroke="#a0704a" stroke-width="1.2"/>
 <path d="M0 0.5 L176 0.5" stroke="#80603a" stroke-width="1"/>
 <path d="M1 1.5 L176 1.5" stroke="#c8d2c2" stroke-width="1"/>
 <rect x="2" y="89" width="21" height="8" fill="#111"/>
</svg>
<div class="t" style="left:775px;top:109px;font-size:6px;color:#eee">谢老师</div>

</body></html>
